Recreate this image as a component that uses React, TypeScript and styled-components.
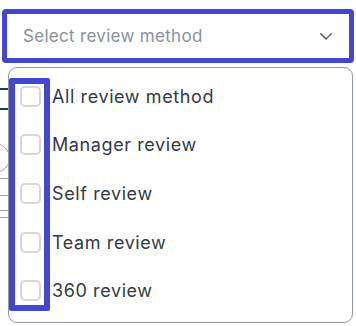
import React from "react";
import styled, { createGlobalStyle } from "styled-components";

const Global = createGlobalStyle`
  html, body { margin: 0; padding: 0; background: #ffffff; }
  body { font-family: Inter, "Noto Sans", sans-serif; }
  * { box-sizing: border-box; }
`;

const Page = styled.div`
  position: relative;
  width: 356px;
  height: 326px;
  overflow: hidden;
  background: #fff;
  padding: 9px 2px 0 2px;
`;

const Backdrop = styled.div`
  position: absolute;
  left: 0;
  top: 88px;
  width: 9px;
  display: flex;
  flex-direction: column;
  pointer-events: none;
`;

const Rule = styled.div<{ $gap: number; $dark?: boolean }>`
  margin-top: ${(p) => p.$gap}px;
  height: ${(p) => (p.$dark ? 2 : 1)}px;
  background: ${(p) => (p.$dark ? "#1f3a5a" : "#a0a4aa")};
`;

const Arc = styled.div`
  margin: 33px 0 0 -20px;
  width: 30px;
  height: 30px;
  border: 1px solid #9aa0a8;
  border-radius: 50%;
`;

const Field = styled.div`
  height: 54px;
  border: 5px solid #4347d0;
  border-radius: 4px;
  background: #fff;
  display: flex;
  align-items: center;
  justify-content: space-between;
  padding: 0 14px 0 16px;
`;

const Placeholder = styled.span`
  font-size: 17px;
  color: #8a909b;
  letter-spacing: 0.3px;
`;

const Panel = styled.div`
  position: absolute;
  left: 8px;
  top: 67px;
  width: 345px;
  height: 256px;
  border: 1px solid #9198a8;
  border-radius: 9px;
  background: #fff;
  padding: 4px 0 0 11px;
  display: flex;
  flex-direction: column;
`;

const Option = styled.label`
  height: 48.6px;
  display: flex;
  align-items: center;
  gap: 11px;
  font-size: 18px;
  letter-spacing: 0.6px;
  color: #343a44;
  cursor: pointer;
`;

const Box = styled.span`
  width: 21px;
  height: 21px;
  border: 2px solid #d3d7de;
  border-radius: 5px;
  background: #fff;
  flex: none;
`;

const Highlight = styled.div`
  position: absolute;
  left: 9px;
  top: 78px;
  width: 41px;
  height: 233px;
  border: 6px solid #4347d0;
  border-radius: 2px;
  pointer-events: none;
`;

const Chevron = () => (
  <svg width="18" height="18" viewBox="0 0 24 24" fill="none" stroke="#5a5f68" strokeWidth="2" strokeLinecap="round" strokeLinejoin="round">
    <path d="M5 9l7 7 7-7" />
  </svg>
);

const options = ["All review method", "Manager review", "Self review", "Team review", "360 review"];

export default function App() {
  return (
    <>
      <Global />
      <Page>
        <Backdrop>
          <Rule $gap={0} $dark />
          <Rule $gap={18} $dark />
          <Arc />
          <Rule $gap={5} />
          <Rule $gap={16} />
          <Rule $gap={14} />
          <Rule $gap={6} />
        </Backdrop>
        <Field>
          <Placeholder>Select review method</Placeholder>
          <Chevron />
        </Field>
        <Panel>
          {options.map((o) => (
            <Option key={o}>
              <Box />
              {o}
            </Option>
          ))}
        </Panel>
        <Highlight />
      </Page>
    </>
  );
}
